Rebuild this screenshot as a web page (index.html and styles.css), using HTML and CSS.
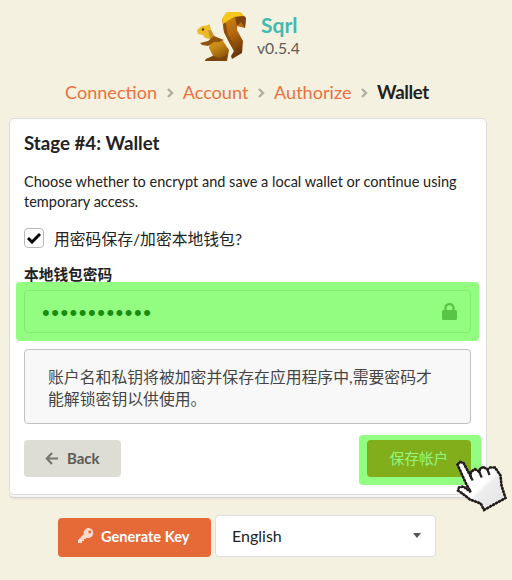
FILE: index.html
```html
<!DOCTYPE html>
<html lang="zh-CN">
<head>
<meta charset="utf-8">
<title>Sqrl</title>
<link rel="stylesheet" href="styles.css">
</head>
<body>
<header class="brand">
  <svg class="logo" width="52" height="52" viewBox="0 0 52 52">
    <defs>
      <linearGradient id="tail" x1="0" y1="0" x2="0.3" y2="1"><stop offset="0" stop-color="#d88c12"/><stop offset=".55" stop-color="#b3660f"/><stop offset="1" stop-color="#6b3508"/></linearGradient>
      <linearGradient id="belly" x1="0" y1="0" x2="0.6" y2="1"><stop offset="0" stop-color="#dfa01b"/><stop offset=".5" stop-color="#c88a15"/><stop offset="1" stop-color="#8a500c"/></linearGradient>
    </defs>
    <path d="M31 1H44L50 7 49 17 41 15 41 19 47 30 46 42 36 48 35 45 38 40 33 31 28 21 26 8Z" fill="url(#tail)"/>
    <path d="M26.500 8 30 13 32 24 38 34 38 40 33 31 28 21Z" fill="#8a4d0b"/>
    <path d="M31 1H44L48 5 38 6 30 11 27 13 26 8Z" fill="#f6c81c"/>
    <path d="M44 1 50 7 49 17 45 11 41 15 39 6 48 5Z" fill="#7d4210"/>
    <path d="M1 19 6 15 11 14.500 13.500 13 15 19 18 25 14 28 9 27 7 24 2 23Z" fill="#eabb26"/>
    <path d="M12 19 15 19 19 26 14 28Z" fill="#c8922b"/>
    <circle cx="7" cy="18.500" r="1.200" fill="#5a3a0c"/>
    <path d="M14 28 19 26 27 30 33 39 31 50H9L10 48 17 45 13 37Z" fill="url(#belly)"/>
    <path d="M18 25 28 29 23 31 18 31 12 35 6 34 4 32 12 30Z" fill="#91540f"/>
    <path d="M17 45 24 47 31 44 31 50H9L10 48Z" fill="#7b450e"/>
  </svg>
  <div class="brand-text"><b class="name">Sqrl</b><span class="version">v0.5.4</span></div>
</header>
<nav class="steps">
  <a>Connection</a><svg class="sep" width="7" height="10" viewBox="0 0 7 10"><path d="M1 1 5 5 1 9"/></svg>
  <a>Account</a><svg class="sep" width="7" height="10" viewBox="0 0 7 10"><path d="M1 1 5 5 1 9"/></svg>
  <a>Authorize</a><svg class="sep" width="7" height="10" viewBox="0 0 7 10"><path d="M1 1 5 5 1 9"/></svg>
  <b>Wallet</b>
</nav>
<main class="card">
  <h1>Stage #4: Wallet</h1>
  <p class="intro">Choose whether to encrypt and save a local wallet or continue using temporary access.</p>
  <div class="check"><span class="box"><svg width="14" height="12" viewBox="0 0 14 12"><path d="M1 6 5 10 13 2"/></svg></span><span>用密码保存/加密本地钱包?</span></div>
  <div class="label">本地钱包密码</div>
  <div class="field-mark"><div class="field"><span class="dots">••••••••••••</span>
    <svg class="lock" width="15" height="17" viewBox="0 0 15 17"><path d="M3.500 8V5a4 4 0 0 1 8 0v3" fill="none" stroke="#58c546" stroke-width="2.300"/><rect y="7" width="15" height="10" rx="1.500" fill="#58c546"/></svg></div></div>
  <div class="note">账户名和私钥将被加密并保存在应用程序中,需要密码才能解锁密钥以供使用。</div>
  <div class="actions">
    <div class="back"><svg width="14" height="13" viewBox="0 0 14 13"><path d="M7 1 1.800 6.500 7 12M2 6.500H13"/></svg>Back</div>
    <div class="save-mark"><div class="save">保存帐户</div>
      <svg class="hand" width="54" height="56" viewBox="0 0 54 56"><defs><linearGradient id="glove" x1="0" y1="0" x2="1" y2="1"><stop offset=".5" stop-color="#fff"/><stop offset=".56" stop-color="#eee"/><stop offset="1" stop-color="#e2e2e2"/></linearGradient></defs><path d="M2.500 6.500 5 4 8.500 5 15.500 18 16 14 20 11 24.500 14 25 10.500 28.500 9 32.500 11.500 35 9.500 40 9.500 45.500 17.500 46.500 27.500 50.500 40 29 52 25.700 45.500 15 41.500 8 36 3 32.500 4 29.500 8.500 28.500 15.700 34 11 25.500Z" fill="url(#glove)" stroke="#251d1c" stroke-width="1.600"/><path d="M2.500 6.500 5 4 8.500 5 15.500 18 16 14 20 11 24.500 14 25 10.500 28.500 9 32.500 11.500 35 9.500 40 9.500 45.500 17.500 46.500 27.500 50.500 40 29 52 25.700 45.500 15 41.500 8 36 3 32.500 4 29.500 8.500 28.500 15.700 34 11 25.500Z" fill="none" stroke="#251d1c" stroke-width="2.600" stroke-dasharray="2.400 1"/><path d="M15.500 18 17.700 22.500M24.300 14 26.700 19.500M32.300 11.300 34.500 17" stroke="#251d1c" stroke-width="2.200"/></svg>
    </div>
  </div>
</main>
<footer class="tools">
  <div class="generate"><svg width="16" height="16" viewBox="0 0 16 16"><path d="M10.500 0a5 5 0 1 1-1.600 9.800L7.500 11H6v2H4v2H0v-3l5.800-5.800A5 5 0 0 1 10.500 0Z" fill="#f9dacd"/><circle cx="11.700" cy="4" r="1.400" fill="#e56a37"/></svg>Generate Key</div>
  <div class="language"><span>English</span><i class="caret"></i></div>
</footer>
</body>
</html>
```
FILE: styles.css
```css
* { box-sizing: border-box; }
body { margin: 0; height: 580px; overflow: hidden; background: #f5f1e0; color: #222; font-family: Lato, "Noto Sans CJK SC", sans-serif; }
svg { flex: none; display: block; }
.brand { display: flex; height: 74px; padding: 11px 0 0 196px; }
.brand-text { display: flex; flex-direction: column; padding-left: 12px; }
.name { color: #42b9af; font-size: 21px; line-height: 26px; padding-top: 1px; margin-left: 1px; }
.version { color: #5d5c57; font-size: 15.7px; line-height: 20px; margin-left: -3px; }
.steps { display: flex; align-items: center; height: 36px; padding-left: 65px; font-size: 18.1px; white-space: nowrap; }
.steps a { color: #e9713f; }
.steps b { font-size: 18.7px; letter-spacing: -0.4px; }
.sep { margin: 2px 9px 0 9.6px; fill: none; stroke: #aeaea2; stroke-width: 2.4; }
.card { width: 478px; height: 377px; margin: 8px 0 0 9px; padding: 13px 15px 0 14px; background: #fff; border: 1px solid #dcdedb; border-radius: 5px; box-shadow: 0 2px 0 #f6f6f4, 0 3px 0 #d4d5d3, 0 5px 1px #e9e6d8; }
h1 { margin: 0; font-size: 18.7px; line-height: 22px; letter-spacing: 0; }
.intro { margin: 18px 0 0; font-size: 14.52px; line-height: 20px; }
.check { display: flex; align-items: center; gap: 10px; height: 22px; margin-top: 15px; font-size: 15.8px; }
.box { display: flex; align-items: center; justify-content: center; width: 20px; height: 20px; border: 1px solid #bbb; border-radius: 4px; }
.box path { fill: none; stroke: #000; stroke-width: 3; }
.label { height: 18px; margin-top: 16px; font-size: 14.7px; font-weight: 700; line-height: 18px; white-space: nowrap; }
.field-mark { margin: -1px -8px 0; height: 59px; padding: 8px; background: #93fd81; border-radius: 4px; }
.field { display: flex; align-items: center; height: 43px; padding: 0 13px 0 17px; border: 1px solid #80ed6e; border-radius: 4px; }
.dots { flex: 1; font: 22px "Liberation Sans", sans-serif; letter-spacing: 1.5px; color: #178c0e; padding-top: 2px; }
.note { height: 75px; margin-top: 8px; padding: 16px 23px 0; background: #f8f8f8; border: 1px solid #c2c2c2; border-radius: 4px; font-size: 15.85px; line-height: 21.5px; color: #444; }
.actions { display: flex; justify-content: space-between; margin-top: 11px; }
.back { display: flex; align-items: center; gap: 8px; width: 97px; height: 37px; margin-top: 5px; padding: 0 0 1px 21px; border-radius: 4px; background: #deddd5; color: #5b5b57; font-size: 15px; font-weight: 700; }
.back path { fill: none; stroke: #777770; stroke-width: 2.2; }
.save-mark { position: relative; width: 122px; height: 50px; margin-right: -10px; padding: 5px 8px; border-radius: 4px; background: #93fd81; }
.save { height: 37px; width: 104px; border-radius: 4px; background: #83ae1b; color: #91f780; font-size: 14.6px; line-height: 37px; text-align: center; }
.hand { position: absolute; left: 96px; top: 23px; }
.tools { display: flex; align-items: center; gap: 4px; height: 42px; margin: 20px 0 0 58px; }
.generate { display: flex; align-items: center; gap: 7px; width: 153px; height: 39px; margin-top: 2px; padding: 0 0 2px 20px; border-radius: 4px; background: #e56a37; color: #fff; font-size: 14.6px; font-weight: 700; white-space: nowrap; }
.language { display: flex; align-items: center; justify-content: space-between; width: 221px; height: 42px; padding: 0 14px 2px 16px; border: 1px solid #dfe0dd; border-radius: 4px; background: #fff; font-size: 16px; }
.caret { border: 4.5px solid transparent; border-top: 5px solid #555; border-bottom: 0; }
```
